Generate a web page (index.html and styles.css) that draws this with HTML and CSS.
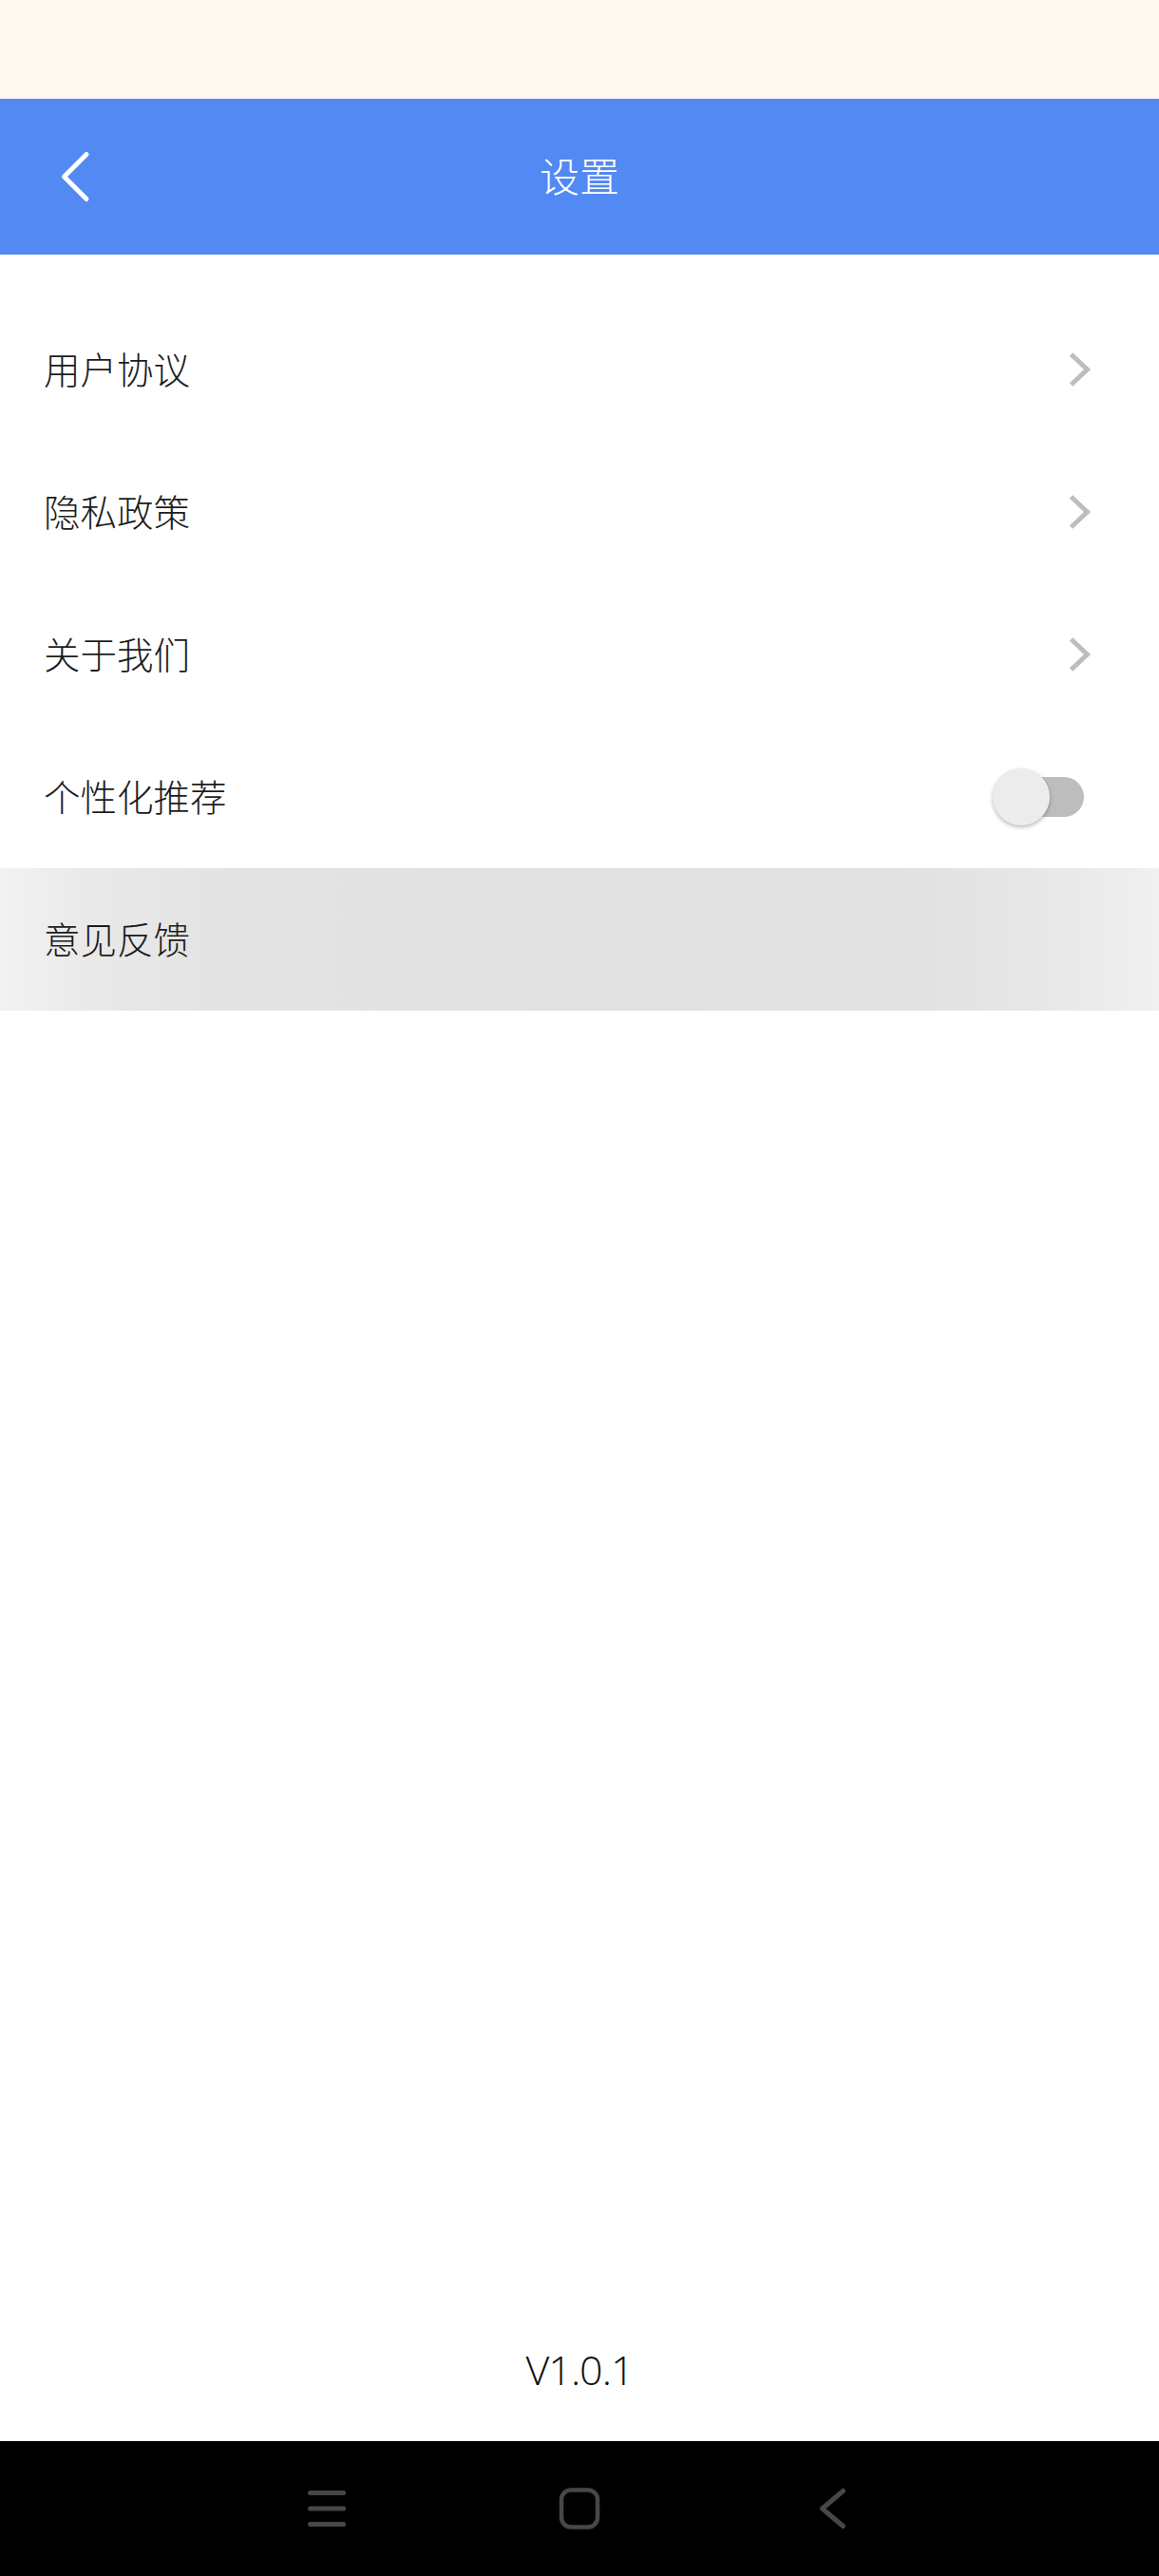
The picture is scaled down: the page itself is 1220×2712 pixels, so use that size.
FILE: index.html
```html
<!DOCTYPE html>
<html lang="zh-CN">
<head>
<meta charset="utf-8">
<title>设置</title>
<link rel="stylesheet" href="styles.css">
</head>
<body>
<div class="page">
  <div class="status-bar"></div>
  <header class="app-bar">
    <div class="app-bar-left">
      <svg class="back-icon" width="40" height="56" viewBox="0 0 40 56">
        <polyline points="33,4.5 9.5,28 33,51.5" fill="none" stroke="#ffffff" stroke-width="5" stroke-linecap="round" stroke-linejoin="round"/>
      </svg>
    </div>
    <h1 class="app-bar-title">设置</h1>
    <div class="app-bar-right"></div>
  </header>
  <main class="settings">
    <ul class="settings-list">
      <li class="settings-row">
        <span class="row-label">用户协议</span>
        <svg class="chevron" width="30" height="44" viewBox="0 0 30 44"><polyline points="4.5,6 21.5,22 4.5,38" fill="none" stroke="#bdbdbd" stroke-width="5"/></svg>
      </li>
      <li class="settings-row">
        <span class="row-label">隐私政策</span>
        <svg class="chevron" width="30" height="44" viewBox="0 0 30 44"><polyline points="4.5,6 21.5,22 4.5,38" fill="none" stroke="#bdbdbd" stroke-width="5"/></svg>
      </li>
      <li class="settings-row">
        <span class="row-label">关于我们</span>
        <svg class="chevron" width="30" height="44" viewBox="0 0 30 44"><polyline points="4.5,6 21.5,22 4.5,38" fill="none" stroke="#bdbdbd" stroke-width="5"/></svg>
      </li>
      <li class="settings-row">
        <span class="row-label">个性化推荐</span>
        <span class="toggle"><span class="toggle-track"></span><span class="toggle-knob"></span></span>
      </li>
      <li class="settings-row settings-row--pressed">
        <span class="row-label">意见反馈</span>
      </li>
    </ul>
  </main>
  <div class="version">V1.0.1</div>
  <nav class="nav-bar">
    <svg class="nav-icon" width="44" height="44" viewBox="0 0 44 44">
      <g stroke="#474747" stroke-width="5" stroke-linecap="round">
        <line x1="4.5" y1="5.5" x2="39.5" y2="5.5"/>
        <line x1="4.5" y1="22" x2="39.5" y2="22"/>
        <line x1="4.5" y1="38.5" x2="39.5" y2="38.5"/>
      </g>
    </svg>
    <svg class="nav-icon" width="44" height="44" viewBox="0 0 44 44">
      <rect x="3" y="2.5" width="38" height="39" rx="10" ry="10" fill="none" stroke="#474747" stroke-width="4.5"/>
    </svg>
    <svg class="nav-icon" width="44" height="44" viewBox="0 0 44 44">
      <polyline points="33.5,3.5 11.5,22 33.5,40.5" fill="none" stroke="#474747" stroke-width="5" stroke-linecap="round" stroke-linejoin="round"/>
    </svg>
  </nav>
</div>
</body>
</html>
```
FILE: styles.css
```css
html, body {
  margin: 0;
  padding: 0;
  background: #ffffff;
}

.page {
  width: 1220px;
  height: 2712px;
  display: flex;
  flex-direction: column;
  font-family: "Noto Sans CJK SC", "Noto Sans", sans-serif;
  color: #222222;
  overflow: hidden;
}

.status-bar {
  height: 104px;
  background: #fff8f0;
  flex: none;
}

.app-bar {
  height: 164px;
  flex: none;
  background: #5289f2;
  display: grid;
  grid-template-columns: 1fr auto 1fr;
  align-items: center;
}

.app-bar-left {
  display: flex;
  align-items: center;
  padding-left: 58px;
}

.back-icon {
  display: block;
}

.app-bar-title {
  margin: 0 0 5px 0;
  font-size: 42px;
  font-weight: 300;
  color: #ffffff;
  line-height: 1;
}

.settings {
  flex: 1;
  padding-top: 46px;
}

.settings-list {
  list-style: none;
  margin: 0;
  padding: 0;
}

.settings-row {
  height: 150px;
  display: flex;
  align-items: center;
  justify-content: space-between;
  padding: 0 67px 0 46px;
}

.row-label {
  font-size: 38.5px;
  font-weight: 300;
  line-height: 1;
  margin-top: -3px;
  color: #1c1c1c;
}

.chevron {
  display: block;
}

.settings-row--pressed {
  background: linear-gradient(to right, #f2f2f2 0%, #e9e9e9 8%, #e3e3e3 20%, #e1e1e1 50%, #e2e2e2 80%, #e9e9e9 92%, #f0f0f0 100%);
}

.toggle {
  position: relative;
  display: block;
  width: 96px;
  height: 60px;
  margin-right: 12px;
}

.toggle-track {
  position: absolute;
  left: 11px;
  top: 9px;
  width: 85px;
  height: 42px;
  border-radius: 21px;
  background: #bdbdbd;
}

.toggle-knob {
  position: absolute;
  left: 0;
  top: 0;
  width: 60px;
  height: 60px;
  border-radius: 50%;
  background: #ececec;
  box-shadow: 0 2px 4px rgba(0, 0, 0, 0.28);
}

.version {
  flex: none;
  height: 60px;
  line-height: 60px;
  margin-bottom: 45px;
  text-align: center;
  font-family: "Open Sans", "Noto Sans", sans-serif;
  font-weight: 300;
  font-size: 43px;
  letter-spacing: -1px;
  color: #111111;
}

.nav-bar {
  flex: none;
  height: 142px;
  background: #000000;
  display: flex;
  align-items: center;
  justify-content: center;
  gap: 222px;
}

.nav-icon {
  display: block;
}
```
